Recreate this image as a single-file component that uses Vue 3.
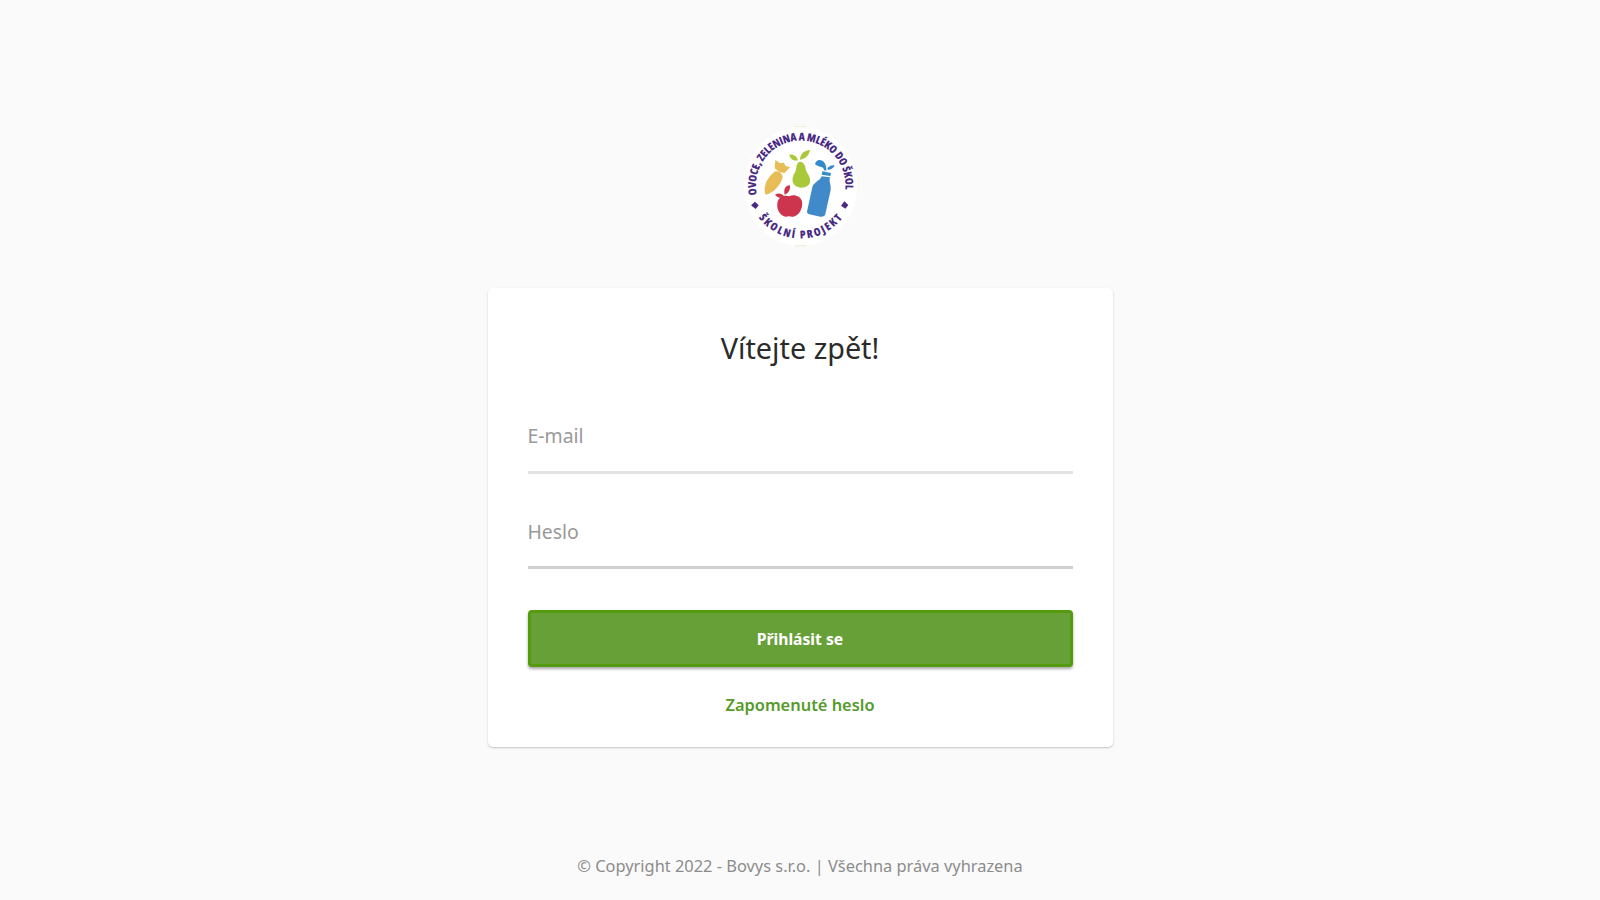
<template>
  <div class="login-page">
    <svg class="logo" viewBox="0 0 420 420" role="img" aria-label="Ovoce, zelenina a mléko do škol">
      <defs>
        <path id="arc-top" d="M81 239 A134 134 0 1 1 343 239" />
        <path id="arc-bottom" d="M86 308 A158 158 0 0 0 338 308" />
      </defs>
      <ellipse cx="212" cy="214" rx="169" ry="179" fill="#ffffff" />
      <path d="M194 35h36M194 392h36" stroke="#eef0dc" stroke-width="4" />
      <text class="logo-text">
        <textPath href="#arc-top" textLength="462" lengthAdjust="spacing">OVOCE, ZELENINA A MLÉKO DO ŠKOL</textPath>
      </text>
      <text class="logo-text">
        <textPath href="#arc-bottom" textLength="290" lengthAdjust="spacing">ŠKOLNÍ PROJEKT</textPath>
      </text>
      <path d="M75 260 86 271 77 282 63 271ZM343 259 355 270 346 281 333 272Z" fill="#492a83" />

      <!-- carrot -->
      <path d="M136 169C145 166 158 176 158 186C154 208 132 233 108 239C98 229 105 190 136 169Z" fill="#e8bd57" />
      <path d="M136 135L150 145L162 143L166 152L180 157L164 174L149 172L134 160Z" fill="#e8bd57" />
      <!-- pear -->
      <path d="M211 140C222 142 226 151 227 163C230 176 243 184 240 202C236 216 219 221 204 216C190 212 185 198 189 185C193 174 198 171 199 157C200 147 203 141 211 140Z" fill="#a9c83a" />
      <path d="M210 134C211 116 222 107 240 105C237 121 227 132 210 134ZM178 119C191 117 201 124 204 136C190 139 181 132 178 119Z" fill="#a9c83a" />
      <!-- apple -->
      <path d="M178 244C190 236 212 242 216 259C220 279 207 303 190 305C183 307 178 302 171 305C153 306 139 284 142 266C143 246 163 239 178 244Z" fill="#cd354f" />
      <path d="M164 239C160 222 166 212 180 211C181 225 176 235 164 239ZM135 239C146 233 155 236 162 243L159 248C149 250 140 246 135 239Z" fill="#cd354f" />
      <!-- bottle -->
      <path d="M275 184L300 187C296 201 304 211 302 225L286 297C285 303 278 306 271 305L238 298C231 296 230 291 232 285L247 217C250 202 269 199 275 184Z" fill="#418ac9" />
      <path d="M277 169L303 174L301 183L275 179ZM282 166C281 155 274 157 264 153L255 148C257 137 266 132 277 137C286 142 290 154 289 167ZM292 159C299 152 306 149 314 151C311 160 303 164 294 165Z" fill="#348bca" />
    </svg>

    <form class="card" @submit.prevent>
      <h1>Vítejte zpět!</h1>
      <input v-model="email" class="field" type="text" placeholder="E-mail" aria-label="E-mail">
      <input v-model="password" class="field field-password" type="password" placeholder="Heslo" aria-label="Heslo">
      <button class="submit" type="submit">Přihlásit se</button>
      <a class="forgot" href="#">Zapomenuté heslo</a>
    </form>

    <footer class="copyright">© Copyright 2022 - Bovys s.r.o. | Všechna práva vyhrazena</footer>
  </div>
</template>

<script setup>
import { ref } from 'vue'

const email = ref('')
const password = ref('')
</script>

<style>
body {
  margin: 0;
  background: #fafafa;
}
</style>

<style scoped>
.login-page {
  box-sizing: border-box;
  height: 900px;
  padding: 115px 0 22px;
  display: flex;
  flex-direction: column;
  align-items: center;
  background: #fafafa;
  font-family: "Noto Sans", "Open Sans", sans-serif;
}

.logo {
  width: 140px;
  height: 140px;
  flex: none;
}

.logo-text {
  fill: #492a83;
  font-family: "Open Sans", sans-serif;
  font-size: 33px;
  font-weight: 800;
  font-stretch: condensed;
}

.card {
  box-sizing: border-box;
  width: 625px;
  height: 459px;
  margin-top: 33px;
  padding: 39px 40px 0;
  display: flex;
  flex-direction: column;
  background: #fff;
  border-radius: 5px;
  box-shadow: 0 1px 2px rgba(0, 0, 0, 0.22);
}

h1 {
  margin: 0 0 45px;
  color: #2b2b2b;
  font-size: 28.8px;
  font-weight: 400;
  line-height: 42px;
  text-align: center;
}

.field {
  box-sizing: border-box;
  width: 100%;
  height: 60px;
  padding: 0 0 14px;
  border: 0;
  border-bottom: 3px solid #e3e3e3;
  border-radius: 0;
  outline: 0;
  background: transparent;
  color: #333;
  font-family: inherit;
  font-size: 19.4px;
}

.field::placeholder {
  color: #999;
  opacity: 1;
}

.field-password {
  margin-top: 35px;
  padding-bottom: 13px;
  border-bottom-color: #d0d0d0;
}

.submit {
  height: 57px;
  margin-top: 41px;
  padding: 0;
  border: 3px solid #559b10;
  border-radius: 4px;
  background: #68a038;
  box-shadow: 0 2px 3px rgba(0, 0, 0, 0.35);
  color: #fff;
  font-family: inherit;
  font-size: 15.7px;
  font-weight: 700;
}

.forgot {
  margin-top: 26px;
  align-self: center;
  color: #559b2b;
  font-size: 16.4px;
  font-weight: 600;
  line-height: 24px;
  text-decoration: none;
}

.copyright {
  margin-top: auto;
  color: #8c8c8c;
  font-size: 16.4px;
  line-height: 25px;
}
</style>
